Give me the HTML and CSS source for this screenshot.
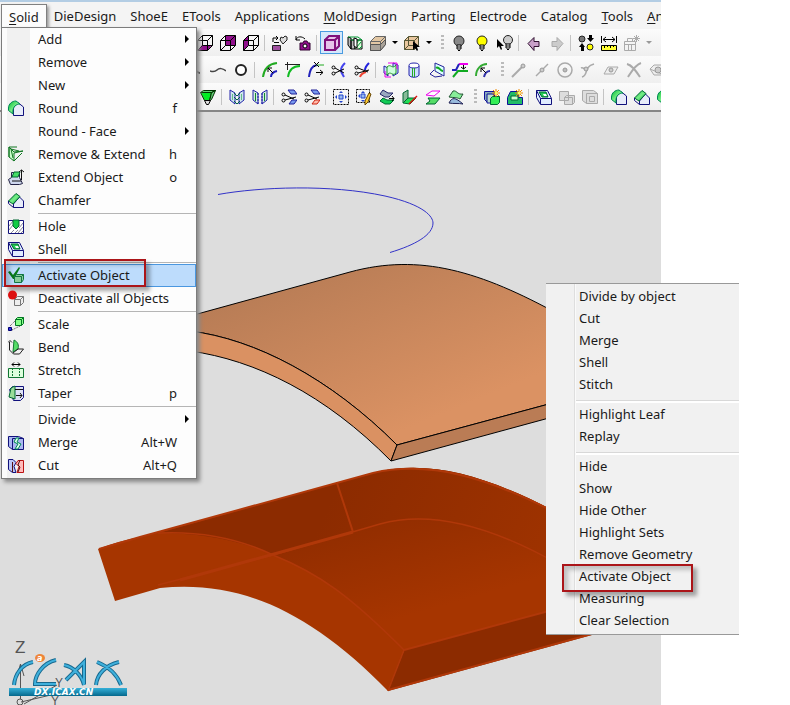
FILE: index.html
```html
<!DOCTYPE html>
<html lang="en">
<head>
<meta charset="utf-8">
<title>Solid modelling</title>
<link rel="stylesheet" href="styles.css">
</head>
<body>
<svg class="sprite" aria-hidden="true">
  <defs>
    <linearGradient id="g-green" x1="0" y1="0" x2="1" y2="1"><stop offset="0" stop-color="#0b3"/><stop offset=".5" stop-color="#7e8"/><stop offset="1" stop-color="#0a3"/></linearGradient>
  </defs>
  <!-- view cubes -->
  <symbol id="cube-bottom" viewBox="0 0 16 16"><path d="M1 15l4-5h10l-4 5z" fill="#90108c"/><path d="M.5 5.500h10v10H.5zM5.500.5h10v10h-10zM.5 5.500l5-5M10.500 5.500l5-5M.5 15.500l5-5M10.500 15.500l5-5" fill="none" stroke="#000"/></symbol>
  <symbol id="cube-back" viewBox="0 0 16 16"><path d="M5 1h10v10H5z" fill="#90108c"/><path d="M.5 5.500h10v10H.5zM5.500.5h10v10h-10zM.5 5.500l5-5M10.500 5.500l5-5M.5 15.500l5-5M10.500 15.500l5-5" fill="none" stroke="#000"/></symbol>
  <symbol id="cube-left" viewBox="0 0 16 16"><path d="M1 5l4-4v10l-4 4z" fill="#90108c"/><path d="M.5 5.500h10v10H.5zM5.500.5h10v10h-10zM.5 5.500l5-5M10.500 5.500l5-5M.5 15.500l5-5M10.500 15.500l5-5" fill="none" stroke="#000"/></symbol>
  <symbol id="view-swap" viewBox="0 0 16 16"><path d="M.5 10.500h8v5h-8z" fill="#a050a0" stroke="#222"/><path d="M1 7V3h4M4 1l2 2-2 2M2 7.500h5" fill="none" stroke="#000"/><path d="M11 9L8 5l1-3 2 1 2-2 2 1v3z" fill="#ddd" stroke="#222"/></symbol>
  <symbol id="camera" viewBox="0 0 16 16"><path d="M5 8h3l1-2h3l1 2h2v7H5z" fill="#90108c" stroke="#300030"/><circle cx="10" cy="11" r="2" fill="#fff" stroke="#000"/><path d="M1 1v4h4M1 5c1-4 6-4 9-1" fill="none" stroke="#000"/></symbol>
  <symbol id="cube-shaded" viewBox="0 0 16 16"><path d="M1 6l5-5h9v9l-5 5H1z" fill="#e6c3ea"/><path d="M1 5h10v10H1zl4-4h10v10l-4 4M11 5l4-4" fill="none" stroke="#80107c" stroke-width="2"/></symbol>
  <symbol id="section" viewBox="0 0 16 16"><path d="M1 2l3 1v11l-3-4zM4 5h4v9H4z" fill="#bbb" stroke="#000"/><path d="M8 5h7v9H8z" fill="#dfd" stroke="#000"/><path d="M1 2h10l4 3H4M9 13l5-6M9 9l3-4M12 14l3-3" stroke="#093" fill="none"/><path d="M7 3v8l3 2V4z" fill="#fff" stroke="#000"/></symbol>
  <symbol id="box-tan" viewBox="0 0 16 16"><path d="M.5 6.500l5-5h10v8l-5 6H.5z" fill="#e2c7a4" stroke="#666"/><path d="M.5 9.500h10v6H.5zM10.500 9.500l5-5v5l-5 6z" fill="#aaa39a" stroke="#555"/><path d="M.5 6.500h10v9M10.500 6.500l5-5" fill="none" stroke="#666"/></symbol>
  <symbol id="box-pick" viewBox="0 0 16 16"><path d="M.5 5.500l4-4h10v9l-4 4H.5z" fill="#e9c79f" stroke="#553"/><path d="M.5 5.500h10v9M10.500 5.500l4-4M4.500 1.500v9l-4 4M4.500 10.500h10" fill="none" stroke="#553"/><path d="M9 6v9l2-2 2 3 1-1-1-3h3z"/></symbol>
  <!-- lamps and history -->
  <symbol id="lamp-off" viewBox="0 0 16 16"><circle cx="8" cy="6" r="5" fill="#888" stroke="#222"/><path d="M6 10h4v4H6z" fill="#fff" stroke="#000"/><path d="M6 12h4M7 15.500h2" stroke="#000"/></symbol>
  <symbol id="lamp-on" viewBox="0 0 16 16"><circle cx="8" cy="6" r="5" fill="#ff0" stroke="#222"/><path d="M6 10h4v4H6z" fill="#fff" stroke="#000"/><path d="M6 12h4M7 15.500h2" stroke="#000"/></symbol>
  <symbol id="lamp-pick" viewBox="0 0 16 16"><circle cx="11" cy="5" r="4.500" fill="#ccc" stroke="#222"/><path d="M9 9h4v4H9z" fill="#fff" stroke="#000"/><path d="M9 11h4M10 14.500h2" stroke="#000"/><path d="M0 4v9l2-2 2 4 1-1-1-3h3z"/></symbol>
  <symbol id="arrow-back" viewBox="0 0 16 16"><path d="M2 8.500l6-6v4h5v5H8v4z" fill="#c8a0c8" stroke="#301030"/></symbol>
  <symbol id="arrow-next" viewBox="0 0 16 16"><path d="M14 8.500l-6-6v4H3v5h5v4z" fill="#ccc" stroke="#aaa"/></symbol>
  <symbol id="lamp-swap" viewBox="0 0 16 16"><circle cx="4" cy="4" r="3" fill="#777" stroke="#222"/><circle cx="12" cy="12" r="3" fill="#ff0" stroke="#222"/><path d="M11 0h3v3h2l-3.500 4L9 3h2zM3 16v-4H1l3-4 3 4H6v4z"/></symbol>
  <symbol id="measure" viewBox="0 0 16 16"><path d="M.5 1v7M15.500 1v7M2 4.500h12M5 2L2 4.500 5 7M11 2l3 2.500L11 7" fill="none" stroke="#000"/><path d="M.5 10.500h15v5H.5z" fill="#ff3" stroke="#000"/><path d="M3.500 10v3M6.500 10v2M9.500 10v3M12.500 10v2" stroke="#000"/></symbol>
  <symbol id="kit-off" viewBox="0 0 16 16"><path d="M.5 6.500h11v9H.5zM3.500 6V3.500h5V6M0 9.500h11M4.500 9v6M7.500 9v6M10 1l5 5M15 1l-5 5M12.500 0v7M9 3.500h7" fill="none" stroke="#aaa"/></symbol>
  <!-- curves -->
  <symbol id="tail" viewBox="0 0 16 16"><path d="M4 2c2 0 4 9 9 9" fill="none" stroke="#111" stroke-width="2"/></symbol>
  <symbol id="wave" viewBox="0 0 16 16"><path d="M0 9c3 1 5 1 7-1s6-2 9 1" fill="none" stroke="#444" stroke-width="1.500"/></symbol>
  <symbol id="ring" viewBox="0 0 16 16"><circle cx="8" cy="8" r="5" fill="#fff" stroke="#222" stroke-width="2"/></symbol>
  <symbol id="arc-offset" viewBox="0 0 16 16"><path d="M1 15C2 7 7 2 15 1" fill="none" stroke="#2a2" stroke-width="2"/><path d="M9 15c0-3 2-5 6-6" fill="none" stroke="#22b" stroke-width="2"/><path d="M11 11L6 6M6 10V6h4" fill="none" stroke="#000"/></symbol>
  <symbol id="arc-fillet" viewBox="0 0 16 16"><path d="M0 2.500h15M2.500 0v8" stroke="#222"/><path d="M3 15C4 8 8 4 15 4" fill="none" stroke="#1b2" stroke-width="2"/></symbol>
  <symbol id="arc-extend" viewBox="0 0 16 16"><path d="M1 15C2 7 4 4 9 3" fill="none" stroke="#22b" stroke-width="2"/><path d="M8 3h8" stroke="#2a2"/><path d="M6 0l5 5M11 0L6 5M8 10.500h7M12 8l3 2.500-3 2.500" fill="none" stroke="#000"/></symbol>
  <symbol id="trim-blue" viewBox="0 0 16 16"><path d="M14 1c-2 2-4 4-4 7s2 5 3 7" fill="none" stroke="#44e" stroke-width="2"/><circle cx="2.500" cy="5.500" r="1.500" fill="none" stroke="#000"/><circle cx="2.500" cy="11.500" r="1.500" fill="none" stroke="#000"/><path d="M4 6l9 5M4 11l9-4" stroke="#000"/></symbol>
  <symbol id="trim-red" viewBox="0 0 16 16"><path d="M15 1c-2 2-4 4-4 7" fill="none" stroke="#22d" stroke-width="2"/><path d="M6 15c1-3 3-4 6-5" fill="none" stroke="#e43" stroke-width="2"/><circle cx="2.500" cy="5.500" r="1.500" fill="none" stroke="#000"/><circle cx="2.500" cy="11.500" r="1.500" fill="none" stroke="#000"/><path d="M4 6l10 4M4 11l11-3" stroke="#000"/></symbol>
  <symbol id="wrap" viewBox="0 0 16 16"><path d="M1 4l4 2v8l-4-3zM10 1l5 2v8l-5 3z" fill="#cdf" stroke="#22a"/><path d="M4 5c4-4 5 3 9-2v8c-4 4-5-3-9 2z" fill="#cfd" stroke="#292"/><path d="M5 1h9v6M2 9v6h6" fill="none" stroke="#e0e"/></symbol>
  <symbol id="cylinder" viewBox="0 0 16 16"><path d="M3 4v9c1 3 9 3 10 0V4z" fill="#cdf" stroke="#22a"/><ellipse cx="8" cy="3.500" rx="5" ry="2.500" fill="#fff" stroke="#22a"/><path d="M6.500 6v9M8.500 6v9" stroke="#2a2"/></symbol>
  <symbol id="project" viewBox="0 0 16 16"><path d="M6 1l9 4v9L6 9z" fill="#dff" stroke="#229"/><path d="M7 6c3-2 4 3 7 3" fill="none" stroke="#1a2" stroke-width="2"/><path d="M5 8l-4 4 5 3 7-1" fill="none" stroke="#229"/></symbol>
  <symbol id="step" viewBox="0 0 16 16"><path d="M7 2h9" stroke="#e0e" stroke-width="2"/><path d="M0 8h4l3-6" fill="none" stroke="#22b" stroke-width="2"/><path d="M1 15l5-6h10" fill="none" stroke="#1a2" stroke-width="2"/><path d="M11.500 3v4M9 5l2.500 2L14 5" fill="none" stroke="#000"/></symbol>
  <symbol id="arc-pair" viewBox="0 0 16 16"><path d="M1 14C1 7 6 2 12 2" fill="none" stroke="#3a3" stroke-width="2"/><path d="M9 15c1-4 3-6 6-6" fill="none" stroke="#33a" stroke-width="2"/><path d="M11 11L6 6M6 10V6h4" fill="none" stroke="#000"/></symbol>
  <symbol id="snap-end" viewBox="0 0 16 16"><path d="M1 15L11 5" stroke="#aaa" stroke-width="2"/><circle cx="12" cy="4" r="2" fill="#ccc" stroke="#999"/></symbol>
  <symbol id="snap-mid" viewBox="0 0 16 16"><path d="M2 14L14 2" stroke="#aaa" stroke-width="1.500"/><circle cx="8" cy="8" r="2" fill="#ccc" stroke="#999"/></symbol>
  <symbol id="snap-centre" viewBox="0 0 16 16"><circle cx="8" cy="8" r="7" fill="none" stroke="#aaa" stroke-width="1.500"/><circle cx="8" cy="8" r="2" fill="#bbb" stroke="#999"/></symbol>
  <symbol id="snap-tangent" viewBox="0 0 16 16"><path d="M2 15c7-2 1-10 12-13M1 6c2-1 3 1 6 2" fill="none" stroke="#aaa" stroke-width="1.500"/><circle cx="6" cy="7" r="2" fill="#ccc" stroke="#999"/></symbol>
  <symbol id="snap-face" viewBox="0 0 16 16"><path d="M1 12l4-7h10l-4 7z" fill="#eee" stroke="#aaa"/><circle cx="8" cy="8" r="2" fill="#ccc" stroke="#999"/></symbol>
  <symbol id="snap-cross" viewBox="0 0 16 16"><path d="M1 2c5 1 9 7 13 13M15 1C9 3 6 9 2 15" fill="none" stroke="#aaa" stroke-width="2"/></symbol>
  <symbol id="snap-eye" viewBox="0 0 16 16"><path d="M1 7l4-4h10v10H5zM1 7l14 6" fill="#eee" stroke="#aaa"/><circle cx="9" cy="8" r="3" fill="#ccc" stroke="#999"/></symbol>
  <!-- surfaces and solids -->
  <symbol id="prism" viewBox="0 0 16 16"><path d="M.5 3.500h11l-2 8h-5z" fill="#0e2" stroke="#030"/><path d="M.5 3.500l3-2h12l-4 2zM11.500 3.500l4-2-4 9-2 2z" fill="#6c7" stroke="#030"/><path d="M4.500 11.500h6l-2 4h-2z" fill="#ddd" stroke="#000"/></symbol>
  <symbol id="panels" viewBox="0 0 16 16"><path d="M1 1l5 3v11l-5-4zM15 1l-5 3v11l5-4z" fill="#cfe6ee" stroke="#22a"/><path d="M5 4l3 3 3-3M5 8l3 3 3-3M5 12l3 3 3-3" fill="none" stroke="#064"/><path d="M3.500 5v6M12.500 5v6" stroke="#6b8"/></symbol>
  <symbol id="panels-open" viewBox="0 0 16 16"><path d="M1 1l5 3v11l-5-4zM15 1l-5 3v11l5-4z" fill="#d5f0df" stroke="#22a"/><path d="M6 4v11M10 4v11" stroke="#22a" stroke-dasharray="2 1"/><path d="M3.500 4v8M12.500 4v8" stroke="#183"/></symbol>
  <symbol id="cut-blue" viewBox="0 0 16 16"><path d="M7 1h6l3 4h-6zM8 15l3-4h5l-3 4z" fill="#79e" stroke="#229"/><circle cx="2.500" cy="5.500" r="1.500" fill="none" stroke="#000"/><circle cx="2.500" cy="11.500" r="1.500" fill="none" stroke="#000"/><path d="M4 6l9 4M4 11l11-3" stroke="#000"/></symbol>
  <symbol id="cut-red" viewBox="0 0 16 16"><path d="M7 1h6l3 4h-6z" fill="#79e" stroke="#229"/><path d="M8 15l3-4h5l-3 4z" fill="#fba" stroke="#c21"/><circle cx="2.500" cy="5.500" r="1.500" fill="none" stroke="#000"/><circle cx="2.500" cy="11.500" r="1.500" fill="none" stroke="#000"/><path d="M4 6l9 4M4 11l11-3" stroke="#000"/></symbol>
  <symbol id="spread" viewBox="0 0 16 16"><path d="M.5.5h15v15H.5z" fill="none" stroke="#000" stroke-dasharray="2 1"/><path d="M6 6h4v4H6z" fill="#9be" stroke="#24c"/><path d="M8 2l2 2H6zM8 14l2-2H6zM2 8l2-2v4zM14 8l-2-2v4z" fill="#24c"/></symbol>
  <symbol id="spread-edit" viewBox="0 0 16 16"><path d="M.5.5h13v13H.5z" fill="none" stroke="#000" stroke-dasharray="2 1"/><path d="M5 5h4v4H5z" fill="#9be" stroke="#24c"/><path d="M7 2l2 2H5zM7 13l2-2H5zM2 7l2-2v4z" fill="#24c"/><path d="M15 5l-3 8-3 3v-4l4-8z" fill="#fc3" stroke="#640"/></symbol>
  <symbol id="sheets" viewBox="0 0 16 16"><path d="M4 1l5 3h5l-4 4H6L1 5z" fill="#9aa8c0" stroke="#226"/><path d="M4 9l4 2h7l-4 4H6l-5-3z" fill="#1c5" stroke="#063"/><path d="M10 9.500h5M13 7l2 2.500-2 2.500" fill="none" stroke="#000"/></symbol>
  <symbol id="sheet-bend" viewBox="0 0 16 16"><path d="M1 4l5-3v9l-5 4z" fill="#8b9" stroke="#063"/><path d="M1 14l5-5h8l-6 6z" fill="#2d5" stroke="#063"/><path d="M7 15l8-8" stroke="#d11" stroke-width="1.500"/></symbol>
  <symbol id="sheet-pink" viewBox="0 0 16 16"><path d="M1 6l6-4h8L9 7z" fill="#fff" stroke="#e0e"/><path d="M3 9h12l-5 6H1l4-3z" fill="#5d6" stroke="#063"/></symbol>
  <symbol id="sheet-soft" viewBox="0 0 16 16"><path d="M1 8l4-6c4-1 4 4 10 3l-3 5c-4-2-5-1-11-2z" fill="#8e9" stroke="#253"/><path d="M1 14c3-6 6-6 14 1-5-1-9 0-14-1z" fill="#9bd" stroke="#225"/></symbol>
  <symbol id="new-box" viewBox="0 0 16 16"><path d="M.5 2.500h10v11h-7l-3-3z" fill="#8ab" stroke="#119"/><path d="M3 5h7v9H3z" fill="#bdc" stroke="#119"/><path d="M6.500 9.500l2-2h7v6l-2 2h-7z" fill="#3e5" stroke="#063"/><path d="M12 0v8M8 4h8M9 1l6 6M15 1L9 7" stroke="#e80"/><circle cx="12" cy="4" r="1.500" fill="#ff5"/></symbol>
  <symbol id="new-solid" viewBox="0 0 16 16"><path d="M.5 8.500l3-6h8v6h4v7H.5z" fill="#2b6" stroke="#119"/><path d="M4 7h7v4H4z" fill="#cfc" stroke="#063"/><path d="M12 0v8M8 4h8M9 1l6 6M15 1L9 7" stroke="#e80"/><circle cx="12" cy="4" r="1.500" fill="#ff5"/></symbol>
  <symbol id="boxes-off" viewBox="0 0 16 16"><path d="M.5 2.500h9v9h-9zM5.500 8.500l2-2h8v7l-2 2h-8zM5.500 8.500h8v7" fill="#ddd" stroke="#aaa"/></symbol>
  <symbol id="frame-off" viewBox="0 0 16 16"><path d="M.5 1.500h11l4 3v10h-11l-4-3zM4.500 4.500h11M4.500 4.500v10M7.500 7.500h5v5h-5z" fill="#ddd" stroke="#aaa"/></symbol>
  <symbol id="round" viewBox="0 0 16 16"><path d="M5.500 15.500V9c0-4 2-6 5-6l5 4v8.500z" fill="#e8ecfa" stroke="#11117c"/><path d="M5 14L.5 10.500V8C.5 4 4 1 8 1l4 3C8 4 5 7 5 11z" fill="url(#g-green)" stroke="#085"/></symbol>
  <symbol id="chamfer" viewBox="0 0 16 16"><path d="M5.500 15.500V12l6-7 4 4v6.500z" fill="#e8ecfa" stroke="#11117c"/><path d="M.5 9L8 1.500l4 3-7 7.500z" fill="url(#g-green)" stroke="#063"/><path d="M.5 9v2.500l5 4" fill="none" stroke="#11117c"/></symbol>
  <symbol id="remove-ext" viewBox="0 0 16 16"><path d="M1 1l5 5 9-1-9 2v8l-5-4z" fill="#cfc" stroke="#172"/><path d="M1 1h8M1 1v10M6 15l8-8M3 3l8 2M3 3l2 9" fill="none" stroke="#172"/></symbol>
  <symbol id="extend" viewBox="0 0 16 16"><path d="M.5 10.500l3-2v-5h8v5l3 6-3 1h-9z" fill="#cfd8ee" stroke="#224"/><path d="M4 8l2-5h6l-2 5z" fill="#4d6" stroke="#063"/><path d="M13.500 1v10M11 3l2.500-2L16 3M4 12h9" fill="none" stroke="#111"/></symbol>
  <symbol id="hole" viewBox="0 0 16 16"><path d="M.5 2.500h15v13H.5z" fill="#fff" stroke="#11117c"/><path d="M1 8l4-5M1 12l4-5M3 15l3-3M10 15l5-6M11 10l4-5M13 15l2-2M7 15l3-3" stroke="#889"/><path d="M5 2v6l3 3 3-3V2z" fill="#1c4" stroke="#063"/></symbol>
  <symbol id="shell" viewBox="0 0 16 16"><path d="M.5 1.500h11l4 8v6h-11l-4-7z" fill="#e0ecff" stroke="#11117c"/><path d="M3 3h7l2 5H6z" fill="#2c5" stroke="#063"/><path d="M4.500 15v-5.500h11M4.500 9.500l-4-8" fill="none" stroke="#11117c"/><path d="M7 5h3l1 2H8z" fill="#fff"/></symbol>
  <symbol id="activate" viewBox="0 0 16 16"><path d="M0 5l2-1 3 4 6-8 1 1-6 11H5z" fill="#087a1a"/><path d="M6.500 9.500l2-2h7v5l-2 3h-7z" fill="#8c9" stroke="#174"/><path d="M6.500 9.500h7v6M13.500 9.500l2-2" fill="none" stroke="#174"/></symbol>
  <symbol id="deactivate" viewBox="0 0 16 16"><circle cx="4.500" cy="5" r="4.500" fill="#d11"/><path d="M6.500 9.500l3-3h6v6l-3 3h-6z" fill="#eee" stroke="#777"/><path d="M6.500 9.500h6v6M12.500 9.500l3-3" fill="none" stroke="#777"/></symbol>
  <symbol id="scale" viewBox="0 0 16 16"><path d="M7.500 3.500l2-2h6v6l-2 2h-6z" fill="#8f8" stroke="#072"/><path d="M7.500 3.500h6v6M13.500 3.500l2-2" fill="none" stroke="#072"/><path d="M.5 11.500h3v3h-3z" fill="#33d" stroke="#007"/><path d="M2 10l6-6M4 14l8-4" stroke="#444" stroke-dasharray="1 1"/></symbol>
  <symbol id="bend" viewBox="0 0 16 16"><path d="M6 1c4 2 5 5 4 9l-5 3z" fill="#5d6" stroke="#173"/><path d="M1.500 3v8l4 4h6l4-5H10l-5 4M0 3.500l2-2 2 2" fill="none" stroke="#222"/></symbol>
  <symbol id="stretch" viewBox="0 0 16 16"><path d="M.5 6.500h15v9H.5z" fill="#dfd" stroke="#173"/><path d="M4.500 6v10M11.500 6v10" stroke="#173" stroke-dasharray="2 1"/><path d="M4 2.500h8M6 .5l-2 2 2 2M10 .5l2 2-2 2" fill="none" stroke="#000"/></symbol>
  <symbol id="taper" viewBox="0 0 16 16"><path d="M1.500 4.500l3-3h11v11l-3 3h-7z" fill="#dde2f6" stroke="#11117c"/><path d="M1 12l2-9 4-2v13z" fill="#9d9" stroke="#063"/><path d="M7 4.500h8M8 10.500h6M12 8l2 2.500-2 2.500" fill="none" stroke="#111"/></symbol>
  <symbol id="merge" viewBox="0 0 16 16"><path d="M.5 2.500h10l5 2v11h-11l-4-3z" fill="#a9b6f0" stroke="#11117c"/><path d="M4.500 4.500h11M4.500 4.500v11" stroke="#11117c"/><path d="M8 4L6 8l4 2-3 5h3l3-5-4-2 2-4z" fill="#dfe" stroke="#085"/></symbol>
  <symbol id="cut" viewBox="0 0 16 16"><path d="M.5 2.500H5l3 3-2 4 2 6H4.500l-4-3z" fill="#bcc6f6" stroke="#11117c"/><path d="M10 3.500h5.500v12H9l2-6-3-3z" fill="#fbb" stroke="#b11"/><path d="M4.500 5v10M12 3l-2 5 2 2-2 5" fill="none" stroke="#511"/></symbol>
</svg>

<div class="app">
  <div class="titlebar"></div>
  <nav class="menubar">
    <button class="menubar-item open"><u>S</u>olid</button>
    <button class="menubar-item">DieDesign</button>
    <button class="menubar-item">ShoeE</button>
    <button class="menubar-item">ETools</button>
    <button class="menubar-item">Applications</button>
    <button class="menubar-item"><u>M</u>oldDesign</button>
    <button class="menubar-item">Parting</button>
    <button class="menubar-item">Electrode</button>
    <button class="menubar-item">Catalog</button>
    <button class="menubar-item"><u>T</u>ools</button>
    <button class="menubar-item"><u>A</u>n</button>
  </nav>

  <div class="toolbars">
    <div class="toolbar toolbar-view">
      <button class="tool" aria-label="Bottom view"><svg><use href="#cube-bottom"/></svg></button>
      <button class="tool" aria-label="Back view"><svg><use href="#cube-back"/></svg></button>
      <button class="tool" aria-label="Left view"><svg><use href="#cube-left"/></svg></button>
      <span class="sep"></span>
      <button class="tool" aria-label="Swap view"><svg><use href="#view-swap"/></svg></button>
      <button class="tool" aria-label="Restore view"><svg><use href="#camera"/></svg></button>
      <span class="sep"></span>
      <button class="tool selected" aria-label="Shaded"><svg><use href="#cube-shaded"/></svg></button>
      <button class="tool" aria-label="Section"><svg><use href="#section"/></svg></button>
      <button class="tool" aria-label="Material"><svg><use href="#box-tan"/></svg></button>
      <button class="drop" aria-label="More materials"></button>
      <button class="tool" aria-label="Pick box"><svg><use href="#box-pick"/></svg></button>
      <button class="drop" aria-label="More picks"></button>
      <span class="grip"></span>
      <button class="tool" aria-label="Hide"><svg><use href="#lamp-off"/></svg></button>
      <button class="tool" aria-label="Show"><svg><use href="#lamp-on"/></svg></button>
      <button class="tool" aria-label="Hide picked"><svg><use href="#lamp-pick"/></svg></button>
      <span class="sep"></span>
      <button class="tool" aria-label="Previous"><svg><use href="#arrow-back"/></svg></button>
      <button class="tool" aria-label="Next"><svg><use href="#arrow-next"/></svg></button>
      <span class="sep"></span>
      <button class="tool" aria-label="Swap shown"><svg><use href="#lamp-swap"/></svg></button>
      <button class="tool" aria-label="Measure"><svg><use href="#measure"/></svg></button>
      <button class="tool" aria-label="Kit"><svg><use href="#kit-off"/></svg></button>
      <button class="drop off" aria-label="More kits"></button>
    </div>
    <div class="toolbar toolbar-curve">
      <button class="tool" aria-label="Curve"><svg><use href="#tail"/></svg></button>
      <button class="tool" aria-label="Spline"><svg><use href="#wave"/></svg></button>
      <button class="tool" aria-label="Circle"><svg><use href="#ring"/></svg></button>
      <span class="sep"></span>
      <button class="tool" aria-label="Offset"><svg><use href="#arc-offset"/></svg></button>
      <button class="tool" aria-label="Fillet"><svg><use href="#arc-fillet"/></svg></button>
      <button class="tool" aria-label="Extend curve"><svg><use href="#arc-extend"/></svg></button>
      <button class="tool" aria-label="Trim"><svg><use href="#trim-blue"/></svg></button>
      <button class="tool" aria-label="Split curve"><svg><use href="#trim-red"/></svg></button>
      <span class="sep"></span>
      <button class="tool" aria-label="Wrap"><svg><use href="#wrap"/></svg></button>
      <button class="tool" aria-label="Cylinder"><svg><use href="#cylinder"/></svg></button>
      <button class="tool" aria-label="Project"><svg><use href="#project"/></svg></button>
      <button class="tool" aria-label="Step"><svg><use href="#step"/></svg></button>
      <button class="tool" aria-label="Arc pair"><svg><use href="#arc-pair"/></svg></button>
      <span class="grip"></span>
      <button class="tool" aria-label="End point"><svg><use href="#snap-end"/></svg></button>
      <button class="tool" aria-label="Mid point"><svg><use href="#snap-mid"/></svg></button>
      <button class="tool" aria-label="Centre"><svg><use href="#snap-centre"/></svg></button>
      <button class="tool" aria-label="Tangent"><svg><use href="#snap-tangent"/></svg></button>
      <button class="tool" aria-label="On face"><svg><use href="#snap-face"/></svg></button>
      <button class="tool" aria-label="Crossing"><svg><use href="#snap-cross"/></svg></button>
      <button class="tool" aria-label="Pierce"><svg><use href="#snap-eye"/></svg></button>
    </div>
    <div class="toolbar toolbar-solid">
      <button class="tool" aria-label="Prism"><svg><use href="#prism"/></svg></button>
      <span class="sep"></span>
      <button class="tool" aria-label="Join faces"><svg><use href="#panels"/></svg></button>
      <button class="tool" aria-label="Open faces"><svg><use href="#panels-open"/></svg></button>
      <span class="sep"></span>
      <button class="tool" aria-label="Cut faces"><svg><use href="#cut-blue"/></svg></button>
      <button class="tool" aria-label="Split faces"><svg><use href="#cut-red"/></svg></button>
      <span class="sep"></span>
      <button class="tool" aria-label="Spread"><svg><use href="#spread"/></svg></button>
      <button class="tool" aria-label="Edit spread"><svg><use href="#spread-edit"/></svg></button>
      <button class="tool" aria-label="Sheets"><svg><use href="#sheets"/></svg></button>
      <button class="tool" aria-label="Bend sheet"><svg><use href="#sheet-bend"/></svg></button>
      <button class="tool" aria-label="Offset sheet"><svg><use href="#sheet-pink"/></svg></button>
      <button class="tool" aria-label="Smooth sheet"><svg><use href="#sheet-soft"/></svg></button>
      <span class="grip"></span>
      <button class="tool" aria-label="New box"><svg><use href="#new-box"/></svg></button>
      <button class="tool" aria-label="New solid"><svg><use href="#new-solid"/></svg></button>
      <span class="sep"></span>
      <button class="tool" aria-label="Shell"><svg><use href="#shell"/></svg></button>
      <button class="tool" aria-label="Boxes"><svg><use href="#boxes-off"/></svg></button>
      <button class="tool" aria-label="Frame"><svg><use href="#frame-off"/></svg></button>
      <span class="sep"></span>
      <button class="tool" aria-label="Round"><svg><use href="#round"/></svg></button>
      <button class="tool" aria-label="Chamfer"><svg><use href="#chamfer"/></svg></button>
      <button class="tool" aria-label="Round face"><svg><use href="#round"/></svg></button>
    </div>
  </div>

  <main class="viewport">
    <svg class="scene" viewBox="0 112 661 593" preserveAspectRatio="xMinYMin slice" role="img" aria-label="Solid model">
      <defs>
        <linearGradient id="tan" gradientUnits="userSpaceOnUse" x1="310" y1="270" x2="380" y2="440"><stop offset="0" stop-color="#b97d56"/><stop offset="1" stop-color="#db9263"/></linearGradient>
        <linearGradient id="rust" gradientUnits="userSpaceOnUse" x1="390" y1="500" x2="430" y2="640"><stop offset="0" stop-color="#8f2c00"/><stop offset=".8" stop-color="#a63500"/></linearGradient>
        <linearGradient id="rust-back" gradientUnits="userSpaceOnUse" x1="340" y1="480" x2="560" y2="580"><stop offset="0" stop-color="#8c2b00"/><stop offset="1" stop-color="#a03300"/></linearGradient>
        <linearGradient id="logo" x1="0" y1="0" x2="0" y2="1"><stop offset="0" stop-color="#35b0d8"/><stop offset="1" stop-color="#05688c"/></linearGradient>
      </defs>
      <path d="M218 194.500C260 187 330 184 385 196C425 205 433 217 433 223C433 235 415 245 390 252.500" fill="none" stroke="#3232c8"/>
      <!-- upper plate -->
      <g stroke="#000" stroke-linejoin="round">
        <path d="M190 316L350 272C420 253 480 271 560 315V401L397 445C330 378 255 339 190 331z" fill="url(#tan)"/>
        <path d="M190 331C255 339 330 378 397 445L391 461C325 394 255 360 190 351z" fill="#da9162"/>
        <path d="M397 445L560 401V415L391 461z" fill="#ba7c55"/>
      </g>
      <!-- lower plate -->
      <path d="M98 549Q118 541 140 537L337 483L373 473C430 458 490 477 560 514V608L404 650L388 691C310 611 240 580 160 588L115 601z" fill="#a63500"/>
      <path d="M158 533L337 483L373 473C430 458 490 477 560 514V565C490 525 430 510 380 524L273 555C240 540 200 533 158 533z" fill="url(#rust-back)"/>
      <path d="M273 555L380 524C430 510 490 525 560 565V608L404 650C350 596 320 574 273 555z" fill="url(#rust)"/>
      <path d="M404 650L560 608L610 630L388 691z" fill="#8c2b00"/>
      <g fill="none" stroke="#b03809" stroke-width="2">
        <path d="M99 549L140 537L373 473C430 460 490 478 560 515M337 483L353 532M404 650L560 608M388 690L610 629" />
        <path d="M158 533C200 531 240 539 273 555C320 574 350 596 404 650L388 691" stroke-width="1.500"/>
        <path d="M158 585L273 555L380 524C430 510 490 525 560 565" stroke-width="1.500"/>
        <path d="M180 580L353 532" stroke-width="3"/>
      </g>
      <!-- axes -->
      <g fill="none" stroke="#555">
        <path d="M20.500 699V665M17 676l3.500-12 3.500 12M21 702l34-8M24 704l33-19"/>
        <circle cx="20" cy="702" r="3"/>
      </g>
      <g class="axis"><text class="axis-z" x="15" y="653">Z</text><text x="55" y="687">Y</text><text x="51" y="705">Y</text></g>
      <g fill="none" stroke="#17698f" stroke-width="4">
        <path d="M14 685C15 674 22 664 33 662M56 660C43 663 35 675 35 684H56M64 665C74 667 82 676 84 685M66 680L84 662V684M97 662C107 666 116 672 121 685M119 662C106 665 97 674 96 685"/>
      </g>
      <g fill="none" stroke="#3fb0dc" stroke-width="2">
        <path d="M14 685C15 674 22 664 33 662M56 660C43 663 35 675 35 684H56M64 665C74 667 82 676 84 685M66 680L84 662V684M97 662C107 666 116 672 121 685M119 662C106 665 97 674 96 685"/>
      </g>
      <ellipse cx="40" cy="658" rx="5" ry="4" fill="#ee8538"/>
      <rect x="9" y="688" width="118" height="8" fill="url(#logo)"/>
      <text class="logo-mark" x="37" y="661">a</text>
      <text class="logo-site" x="34" y="695">DX.ICAX.CN</text>
    </svg>
  </main>

  <ul class="menu">
    <li><button>Add<i class="more"></i></button></li>
    <li><button>Remove<i class="more"></i></button></li>
    <li><button>New<i class="more"></i></button></li>
    <li><button><svg><use href="#round"/></svg>Round<kbd>f</kbd></button></li>
    <li><button>Round - Face<i class="more"></i></button></li>
    <li><button><svg><use href="#remove-ext"/></svg>Remove &amp; Extend<kbd>h</kbd></button></li>
    <li><button><svg><use href="#extend"/></svg>Extend Object<kbd>o</kbd></button></li>
    <li><button><svg><use href="#chamfer"/></svg>Chamfer</button></li>
    <li class="rule"></li>
    <li><button><svg><use href="#hole"/></svg>Hole</button></li>
    <li><button><svg><use href="#shell"/></svg>Shell</button></li>
    <li class="rule"></li>
    <li class="marked"><button class="hot"><svg><use href="#activate"/></svg>Activate Object</button></li>
    <li><button><svg><use href="#deactivate"/></svg>Deactivate all Objects</button></li>
    <li class="rule"></li>
    <li><button><svg><use href="#scale"/></svg>Scale</button></li>
    <li><button><svg><use href="#bend"/></svg>Bend</button></li>
    <li><button><svg><use href="#stretch"/></svg>Stretch</button></li>
    <li><button><svg><use href="#taper"/></svg>Taper<kbd>p</kbd></button></li>
    <li class="rule"></li>
    <li><button>Divide<i class="more"></i></button></li>
    <li><button><svg><use href="#merge"/></svg>Merge<kbd>Alt+W</kbd></button></li>
    <li><button><svg><use href="#cut"/></svg>Cut<kbd>Alt+Q</kbd></button></li>
  </ul>
</div>

<ul class="context">
  <li><button>Divide by object</button></li>
  <li><button>Cut</button></li>
  <li><button>Merge</button></li>
  <li><button>Shell</button></li>
  <li><button>Stitch</button></li>
  <li class="rule"></li>
  <li><button>Highlight Leaf</button></li>
  <li><button>Replay</button></li>
  <li class="rule"></li>
  <li><button>Hide</button></li>
  <li><button>Show</button></li>
  <li><button>Hide Other</button></li>
  <li><button>Highlight Sets</button></li>
  <li><button>Remove Geometry</button></li>
  <li class="marked"><button>Activate Object</button></li>
  <li><button>Measuring</button></li>
  <li><button>Clear Selection</button></li>
</ul>
</body>
</html>
```
FILE: styles.css
```css
* { box-sizing: border-box; }

body {
  margin: 0;
  background: #fff;
  color: #1a1a1a;
  font: 13px/22px "Noto Sans", "Open Sans", sans-serif;
}

button {
  border: 0;
  padding: 0;
  background: none;
  color: inherit;
  font: inherit;
  text-align: left;
  white-space: nowrap;
}

u { text-underline-offset: 2px; }

.sprite { position: absolute; width: 0; height: 0; }

.app {
  position: relative;
  display: flex;
  flex-direction: column;
  height: 100vh;
  margin-right: 129px;
}

.titlebar { height: 2px; background: #b3cde4; }

.menubar {
  display: flex;
  height: 27px;
  padding: 2px 0 0 1px;
  overflow: hidden;
  background: #f4f4f4;
}

.menubar-item {
  flex: none;
  height: 24px;
  padding: 0 7px;
}

.menubar-item.open {
  border: 1px solid #808080;
  border-bottom: 0;
  padding: 0 7px;
  background: #fcfcfc;
  box-shadow: 2px 2px 3px #999;
}

.toolbars { border-bottom: 2px solid #858585; }

.toolbar {
  display: flex;
  align-items: center;
  height: 27px;
  overflow: hidden;
  background: linear-gradient(#fbfbfb, #efefef);
}

.toolbar-view { padding-left: 193px; }
.toolbar-curve { padding-left: 183px; }
.toolbar-solid { padding-left: 196px; }

.tool {
  flex: none;
  display: grid;
  place-items: center;
  width: 23px;
  height: 23px;
}

.tool svg,
.menu svg { width: 16px; height: 16px; }

.tool.selected { border: 1px solid #4a9be0; background: #d5e8fb; }

.sep { flex: none; width: 6px; height: 16px; border-left: 1px solid #c4c4c4; margin-left: 2px; margin-right: -2px; }

.grip {
  flex: none;
  width: 3px;
  height: 15px;
  margin: 0 3px 0 7px;
  background: repeating-linear-gradient(#bbb 0 2px, transparent 2px 4px);
}

.drop { flex: none; display: grid; place-items: center; width: 11px; height: 23px; }

.drop::before {
  content: "";
  border: 3px solid transparent;
  border-top-color: #000;
  border-bottom: 0;
}

.drop.off::before { border-top-color: #999; }

.viewport { flex: 1; min-height: 0; background: #ddd; overflow: hidden; }

.scene { display: block; width: 100%; height: 100%; }

.axis { font: 12px "Liberation Sans", sans-serif; fill: #555; }
.axis-z { font-size: 17px; }
.logo-site { font: italic bold 9px "DejaVu Sans", sans-serif; fill: #fff; }
.logo-mark { font: italic bold 8px "DejaVu Sans", sans-serif; fill: #fff; }

.menu,
.context {
  position: absolute;
  margin: 0;
  padding: 0;
  list-style: none;
}

.menu {
  left: 1px;
  top: 27px;
  width: 196px;
  padding-bottom: 1px;
  border: 1px solid #7c7c7c;
  background: linear-gradient(90deg, #fcfcfc 5px, #f1f1f1 5px 28px, #fdfdfd 28px);
  box-shadow: 3px 3px 4px #888;
}

.menu button {
  position: relative;
  display: flex;
  align-items: center;
  width: 100%;
  height: 23px;
  padding: 0 19px 2px 36px;
}

.menu svg { position: absolute; left: 6px; top: 3px; }

.menu .hot {
  background: #bddcfc;
  box-shadow: inset 0 0 0 1px #4a97e0;
}

.menu kbd { margin-left: auto; font: inherit; }

.more {
  margin: 0 -12px 0 auto;
  border: 4px solid transparent;
  border-left-color: #000;
  border-right: 0;
}

.menu .rule { height: 3px; padding: 1px 0 0 36px; }
.menu .rule::before { content: ""; display: block; height: 1px; background: #b5b5b5; }

.context {
  left: 546px;
  top: 283px;
  width: 193px;
  border: solid #999;
  border-width: 1px 0;
  padding: 1px 0 3px;
  background: linear-gradient(90deg, #f1f1f1 28px, #dedede 28px 29px, #fafafa 29px 30px, #f1f1f1 30px);
}

.context button { display: block; width: 100%; height: 22px; padding-left: 33px; }

.context .rule { height: 8px; padding: 5px 0 0 30px; }
.context .rule::before { content: ""; display: block; height: 2px; border-top: 1px solid #d8d8d8; background: #fff; }

.marked { position: relative; }

.marked::after {
  content: "";
  position: absolute;
  inset: -5px 50px 0 2px;
  border: 2px solid #ab1519;
  box-shadow: 4px 4px 4px #0005, inset 4px 4px 4px #0003;
  pointer-events: none;
}

.context .marked::after { inset: -1px 46px -5px 16px; }
```
